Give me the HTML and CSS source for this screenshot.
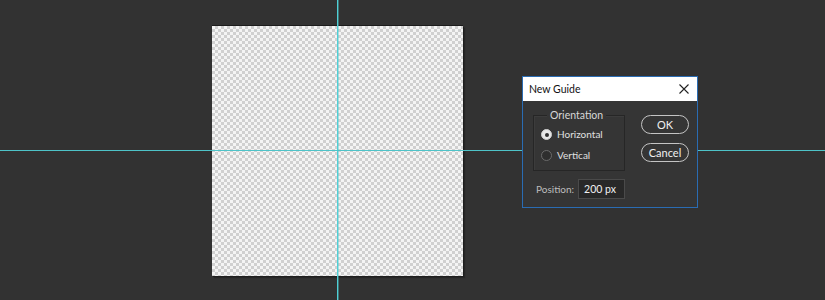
FILE: index.html
```html
<!DOCTYPE html>
<html>
<head>
<meta charset="utf-8">
<link rel="stylesheet" href="styles.css">
</head>
<body>
<div class="workspace">
  <div class="doc"></div>
  <div class="guide guide-v"></div>
  <div class="guide guide-h"></div>
  <div class="dialog">
    <div class="titlebar">
      <span class="title">New Guide</span>
      <svg class="close" width="10" height="10" viewBox="0 0 10 10"><path d="M0.5 0.5 L9.5 9.5 M9.5 0.5 L0.5 9.5" stroke="#222" stroke-width="1.1" fill="none"/></svg>
    </div>
    <div class="body">
      <div class="top">
        <div class="group">
          <span class="legend">Orientation</span>
          <label class="radio"><span class="dot checked"></span>Horizontal</label>
          <label class="radio"><span class="dot"></span>Vertical</label>
        </div>
        <div class="buttons">
          <div class="btn">OK</div>
          <div class="btn">Cancel</div>
        </div>
      </div>
      <div class="pos">
        <span class="pos-label">Position:</span>
        <span class="input">200 px</span>
      </div>
    </div>
  </div>
</div>
</body>
</html>
```
FILE: styles.css
```css
html, body {
  margin: 0;
  padding: 0;
  background: #323232;
}
.workspace {
  position: relative;
  width: 825px;
  height: 300px;
  overflow: hidden;
  background: #323232;
  font-family: Lato, "Open Sans", sans-serif;
}
.doc {
  position: absolute;
  left: 212px;
  top: 26px;
  width: 251px;
  height: 250px;
  background-color: #f4f4f4;
  background-image:
    linear-gradient(45deg, #d0d0d0 25%, transparent 25%, transparent 75%, #d0d0d0 75%),
    linear-gradient(45deg, #d0d0d0 25%, transparent 25%, transparent 75%, #d0d0d0 75%);
  background-size: 6px 6px;
  background-position: 0 0, 3px 3px;
  box-shadow: 0 -1px 0 #1c1c1c, 1px 1px 0 #1e1e1e, 2px 2px 1px #262626;
}
.guide {
  position: absolute;
  background: #4ec3c8;
}
.guide-v {
  left: 337px;
  top: 0;
  width: 2px;
  height: 300px;
  background: linear-gradient(to right, #4fd0d6 0 50%, rgba(79, 200, 206, 0.45) 50% 100%);
}
.guide-h {
  left: 0;
  top: 150px;
  width: 825px;
  height: 1px;
}
.dialog {
  position: absolute;
  left: 522px;
  top: 76px;
  width: 174px;
  height: 130px;
  border: 1px solid #2a6cb3;
  background: #353535;
  display: flex;
  flex-direction: column;
}
.titlebar {
  height: 24px;
  background: #ffffff;
  display: flex;
  align-items: center;
  justify-content: space-between;
  padding: 0 8px 0 6px;
}
.title {
  font-size: 10.5px;
  color: #111;
}
.close {
  display: block;
}
.body {
  flex: 1;
  padding: 14px 8px 0 10px;
  display: flex;
  flex-direction: column;
}
.top {
  display: flex;
  justify-content: space-between;
}
.group {
  position: relative;
  width: 92px;
  height: 56px;
  border: 1px solid #262626;
  box-shadow: inset 1px 1px 0 #3c3c3c;
  box-sizing: border-box;
  padding: 11px 0 0 7px;
  display: flex;
  flex-direction: column;
  gap: 6px;
}
.legend {
  position: absolute;
  left: 13px;
  top: -8px;
  padding: 0 3px;
  background: #353535;
  font-size: 10.5px;
  color: #d8d8d8;
  line-height: 14px;
}
.radio {
  display: flex;
  align-items: center;
  gap: 5px;
  font-size: 10px;
  color: #e0e0e0;
  line-height: 15px;
}
.dot {
  width: 9px;
  height: 9px;
  border-radius: 50%;
  border: 1px solid #6a6a6a;
  background: #2e2e2e;
  box-sizing: content-box;
  position: relative;
}
.dot.checked {
  background: #e8e8e8;
  border-color: #cfcfcf;
}
.dot.checked::after {
  content: "";
  position: absolute;
  left: 2.5px;
  top: 2.5px;
  width: 4px;
  height: 4px;
  border-radius: 50%;
  background: #303030;
}
.buttons {
  display: flex;
  flex-direction: column;
  gap: 9px;
  padding-top: 0;
}
.btn {
  width: 46px;
  height: 17px;
  border: 1.5px solid #c4c4c4;
  border-radius: 10px;
  color: #f0f0f0;
  font-size: 11px;
  line-height: 17px;
  text-align: center;
}
.pos {
  display: flex;
  align-items: center;
  gap: 4px;
  margin-top: 8px;
  padding-left: 3px;
}
.pos-label {
  font-size: 10px;
  color: #bdbdbd;
}
.input {
  width: 40px;
  height: 18px;
  background: #282828;
  border: 1px solid #4a4a4a;
  color: #f0f0f0;
  font-size: 10.5px;
  line-height: 18px;
  padding-left: 5px;
}
```
